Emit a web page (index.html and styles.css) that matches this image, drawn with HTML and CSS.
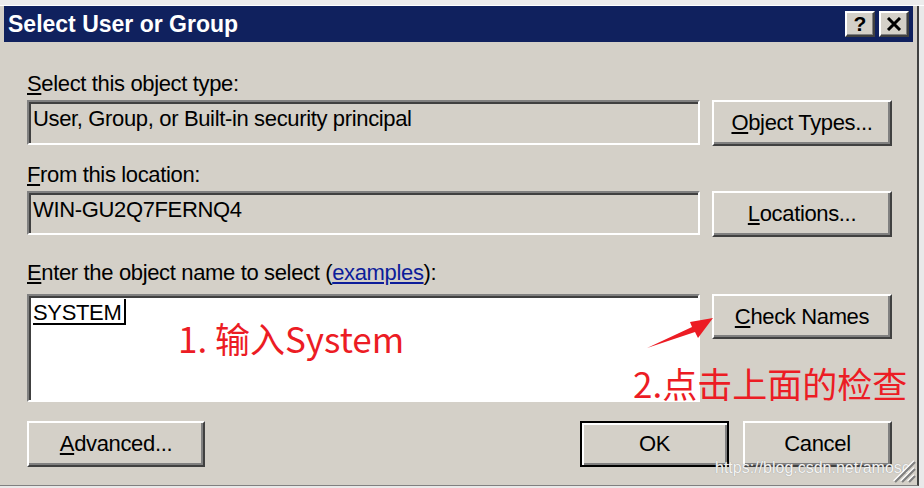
FILE: index.html
```html
<!DOCTYPE html>
<html>
<head>
<meta charset="utf-8">
<title>Select User or Group</title>
<link rel="stylesheet" href="styles.css">
</head>
<body>
<div class="screen">
  <div class="topstrip"></div>
  <div class="frame">
    <div class="titlebar">
      <span class="title">Select User or Group</span>
      <div class="tbtns">
        <div class="tbtn help">?</div>
        <div class="tbtn close">
          <svg class="xicon" viewBox="0 0 16 14" width="16" height="14">
            <path d="M2 1 L14 13 M14 1 L2 13" stroke="#000" stroke-width="3" fill="none"/>
          </svg>
        </div>
      </div>
    </div>
    <div class="content">
      <div class="label l1"><u>S</u>elect this object type:</div>
      <div class="row">
        <div class="field f1">User, Group, or Built-in security principal</div>
        <div class="btn b1"><span><u>O</u>bject Types...</span></div>
      </div>
      <div class="label l2"><u>F</u>rom this location:</div>
      <div class="row">
        <div class="field f2">WIN-GU2Q7FERNQ4</div>
        <div class="btn b2"><span><u>L</u>ocations...</span></div>
      </div>
      <div class="label l3"><u>E</u>nter the object name to select (<a class="link">examples</a>):</div>
      <div class="row">
        <div class="field f3"><span class="sel">SYSTEM</span></div>
        <div class="btn b3"><span><u>C</u>heck Names</span></div>
      </div>
      <div class="bottomrow">
        <div class="btn adv"><span><u>A</u>dvanced...</span></div>
        <div class="okcancel">
          <div class="btn ok"><span>OK</span></div>
          <div class="btn cancel"><span>Cancel</span></div>
        </div>
      </div>
    </div>
  </div>

  <div class="note note1">1. 输入System</div>
  <div class="note note2">2.点击上面的检查</div>

  <svg class="arrow" viewBox="0 0 924 488" width="924" height="488">
    <polygon points="647,348 692,327 690,322 713,318 698,338 695,332" fill="#ec1c24"/>
  </svg>

  <div class="watermark">https://blog.csdn.net/amosc</div>

  <svg class="grip" viewBox="0 0 24 24" width="24" height="24">
    <path d="M23 3 L3 23 M23 10 L10 23 M23 17 L17 23" stroke="#808080" stroke-width="2.4" fill="none"/>
    <path d="M22 1.6 L1.6 22 M22 8.6 L8.6 22 M22 15.6 L15.6 22" stroke="#ffffff" stroke-width="1.2" fill="none"/>
  </svg>
</div>
</body>
</html>
```

FILE: styles.css
```css
* { box-sizing: border-box; }

html, body {
  margin: 0;
  padding: 0;
  background: #e9e9e9;
}

.screen {
  position: relative;
  width: 924px;
  height: 488px;
  overflow: hidden;
  background: #e9e9e9;
  font-family: "Liberation Sans", Arial, sans-serif;
  font-size: 22px;
  letter-spacing: -0.35px;
  color: #000;
}

.topstrip {
  height: 6px;
  background: #ececec;
  border-bottom: 1px solid #ffffff;
}

.frame {
  width: 919px;
  height: 480px;
  background: #d4d0c8;
  border-right: 2px solid #404040;
  border-bottom: 1px solid #808080;
  display: flex;
  flex-direction: column;
}

.titlebar {
  margin-left: 4px;
  width: 909px;
  height: 36px;
  background: #10215e;
  display: flex;
  align-items: center;
  justify-content: space-between;
  padding: 0 4px 0 4px;
}

.title {
  font-weight: bold;
  font-size: 23px;
  letter-spacing: 0;
  color: #ffffff;
  line-height: 36px;
}

.tbtns {
  display: flex;
  gap: 4px;
}

.tbtn {
  width: 30px;
  height: 26px;
  background: #d4d0c8;
  border: 2px solid;
  border-color: #ffffff #404040 #404040 #ffffff;
  box-shadow: inset -1px -1px 0 #808080;
  display: flex;
  align-items: center;
  justify-content: center;
}

.help {
  font-weight: bold;
  font-size: 21px;
  letter-spacing: 0;
  line-height: 22px;
}

.content {
  padding-left: 27px;
  width: 892px;
  display: flex;
  flex-direction: column;
}

.label {
  height: 28px;
  line-height: 28px;
  white-space: nowrap;
}

.l1 { margin-top: 28px; }
.l2 { margin-top: 15px; }
.l3 { margin-top: 22px; }

.link {
  color: #0c1c9a;
  text-decoration: underline;
}

.row {
  display: flex;
  align-items: flex-start;
  gap: 12px;
  margin-top: 2px;
}

.l3 + .row { margin-top: 7px; }

.field {
  width: 673px;
  border: 2px solid;
  border-color: #808080 #ffffff #ffffff #808080;
  box-shadow: inset 2px 2px 0 #404040;
  padding: 3px 4px 0 4px;
  line-height: 28px;
  white-space: nowrap;
  background: #d4d0c8;
}

.f1 { height: 45px; }
.f2 { height: 44px; }
.f3 {
  height: 108px;
  background: #ffffff;
}

.sel {
  display: inline-block;
  padding: 3px 3px 0 0;
  line-height: 21px;
  border-right: 2px solid #000;
  border-bottom: 2px solid #000;
}

.btn {
  width: 180px;
  height: 46px;
  background: #d4d0c8;
  border: 2px solid;
  border-color: #ffffff #404040 #404040 #ffffff;
  box-shadow: inset -2px -2px 0 #808080;
  display: flex;
  align-items: center;
  justify-content: center;
  line-height: 28px;
  white-space: nowrap;
}

.b3 { height: 45px; }

.bottomrow {
  margin-top: 19px;
  display: flex;
  justify-content: space-between;
  align-items: flex-start;
}

.adv { width: 178px; }

.okcancel {
  display: flex;
  gap: 14px;
}

.ok, .cancel { width: 149px; }

.ok {
  border: 2px solid #000;
  box-shadow: inset 2px 2px 0 #ffffff, inset -2px -2px 0 #808080;
}

.note {
  position: absolute;
  font-family: "Noto Sans CJK SC", "Noto Sans", sans-serif;
  color: #ec1c24;
  font-size: 35px;
  line-height: 36px;
  letter-spacing: 0;
  white-space: nowrap;
}

.note1 {
  left: 178px;
  top: 320px;
}

.note2 {
  left: 633px;
  top: 365px;
}

.arrow {
  position: absolute;
  left: 0;
  top: 0;
}

.watermark {
  position: absolute;
  left: 715px;
  top: 458px;
  font-size: 16px;
  letter-spacing: 0;
  line-height: 20px;
  color: #f4f4f4;
  text-shadow: 0 0 1px #8a8a8a;
  white-space: nowrap;
}

.grip {
  position: absolute;
  left: 892px;
  top: 459px;
}
```
